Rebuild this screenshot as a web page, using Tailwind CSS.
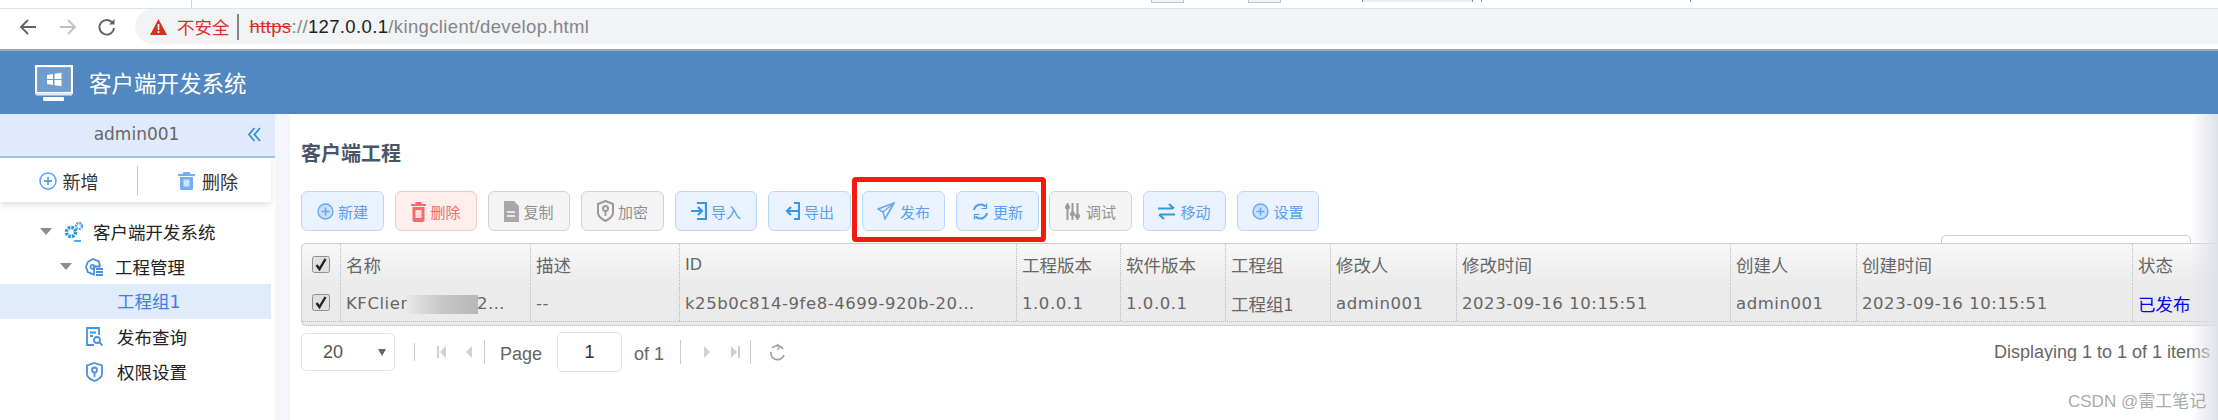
<!DOCTYPE html>
<html lang="zh-CN">
<head>
  <meta charset="UTF-8" />
  <title>客户端开发系统</title>
  <script src="https://cdn.jsdelivr.net/npm/@tailwindcss/browser@4"></script>
</head>
<body class="bg-white overflow-hidden font-['Noto_Sans_CJK_SC','Noto_Sans',sans-serif]">
  <div class="relative w-[2218px] h-[420px] overflow-hidden">

    <!-- Browser chrome -->
    <div class="relative h-[51px] bg-white border-b-2 border-[#aaa8a8]">
      <div class="flex h-[9px] border-b border-[#dfe1e3]">
        <div class="w-[192px] border-r border-[#d5d5d5]"></div>
        <div class="w-[959px]"></div>
        <div class="w-[33px] h-[3px] bg-[#f2f2f2] border-x border-b border-[#c4c4c4]"></div>
        <div class="w-[64px]"></div>
        <div class="w-[33px] h-[3px] bg-[#f2f2f2] border-x border-b border-[#c4c4c4]"></div>
        <div class="w-[81px]"></div>
        <div class="w-[111px] h-[2px] bg-[#eeeeee] border-x border-[#888]"></div>
        <div class="w-[8px]"></div>
        <div class="w-[210px] h-[2px] border-x border-[#888]"></div>
      </div>
      <div class="flex items-center h-[35px]">
        <svg class="ml-[18px] w-[20px] h-[20px]" viewBox="0 0 20 20" fill="none" stroke="#5f6368" stroke-width="1.8"><path d="M18 10H3M10 3l-7 7 7 7"/></svg>
        <svg class="ml-[20px] w-[20px] h-[20px]" viewBox="0 0 20 20" fill="none" stroke="#bdc1c6" stroke-width="1.8"><path d="M2 10h15M10 3l7 7-7 7"/></svg>
        <svg class="ml-[19px] w-[20px] h-[20px]" viewBox="0 0 20 20" fill="none" stroke="#5f6368" stroke-width="1.9"><path d="M16 6.5A7.3 7.3 0 1 0 17 11"/><path d="M17.5 2v5.5H12" fill="#5f6368" stroke="none"/></svg>
        <div class="ml-[18px] flex-1 h-[35px] bg-[#f1f3f4] rounded-l-[18px] flex items-center text-[17.5px]">
          <svg class="ml-[15px] w-[17px] h-[16px]" viewBox="0 0 17 16"><path d="M8.5 0 17 16H0z" fill="#d93025"/><path d="M7.7 5h1.6v6H7.700zM7.700 12h1.600v2H7.700z" fill="#fff"/></svg>
          <span class="ml-[10px] text-[#d93025] leading-none">不安全</span>
          <span class="ml-[7px] w-[2px] h-[26px] bg-[#80868b]"></span>
          <span class="ml-[11px] font-['Liberation_Sans',sans-serif] text-[18.5px] text-[#80868b] tracking-[0.36px] whitespace-nowrap"><span class="text-[#d93025] line-through">https</span>://<span class="text-[#202124]">127.0.0.1</span>/kingclient/develop.html</span>
        </div>
      </div>
    </div>

    <!-- App header -->
    <div class="h-[63px] bg-[#5288c1] flex items-center text-white">
      <svg class="ml-[35px] w-[38px] h-[36px]" viewBox="0 0 38 36">
        <rect x="1" y="1" width="36" height="27" fill="#6f9dce" stroke="#fff" stroke-width="2.200"/>
        <path d="M1 28h36v2.500H1z" fill="#dce8f5"/>
        <rect x="8" y="32" width="21" height="4" rx="1" fill="#fff"/>
        <path d="M12 10l6-1v5h-6zM19.500 8.800l7-1.100V14h-7zM12 15h6v5l-6-1zM19.500 15h7v6.300l-7-1.100z" fill="#fff"/>
      </svg>
      <div class="ml-[16px] text-[22.5px] leading-none whitespace-nowrap">客户端开发系统</div>
    </div>

    <div class="flex h-[306px]">
      <!-- Sidebar -->
      <div class="w-[275px] shrink-0 bg-white">
        <div class="relative h-[44px] bg-[#e0eafc] border-b-2 border-[#9cc5ec] flex items-center justify-center text-[17px] text-[#666] font-['DejaVu_Sans',sans-serif]">
          <span class="ml-[-2px]">admin001</span>
          <svg class="absolute left-[248px] top-[13px] w-[13px] h-[15px]" viewBox="0 0 13 15" fill="none" stroke="#2f8fe0" stroke-width="1.800"><path d="M6.500 1 1 7.500 6.500 14M12 1 6.500 7.500 12 14"/></svg>
        </div>
        <div class="w-[271px] h-[44px] pt-[2px] flex items-center shadow-[0_3px_6px_rgba(0,0,0,0.12)] text-[18px] text-[#333]">
          <div class="w-[137px] flex items-center justify-center">
            <svg class="w-[18px] h-[18px]" viewBox="0 0 18 18" fill="none" stroke="#5a9ff5" stroke-width="1.500"><circle cx="9" cy="9" r="8"/><path d="M9 5v8M5 9h8" stroke-width="1.800"/></svg>
            <span class="ml-[6px] leading-none">新增</span>
          </div>
          <div class="w-px h-[30px] bg-[#c8c8c8]"></div>
          <div class="flex-1 flex items-center pl-[40px]">
            <svg class="w-[17px] h-[18px]" viewBox="0 0 17 18"><path d="M5.500 0h6l1 2H17v2H0V2h4.500z" fill="#6fb0f5"/><path d="M2 5h13v11.500a1.500 1.500 0 0 1-1.500 1.500h-10A1.500 1.500 0 0 1 2 16.500z" fill="#6fb0f5"/><path d="M5.500 7.500h6v7h-6z" fill="#cfe4fb"/></svg>
            <span class="ml-[7px] leading-none">删除</span>
          </div>
        </div>
        <div class="pt-[12px] w-[271px] text-[17.500px] text-[#222] leading-none">
          <div class="h-[35px] flex items-center">
            <span class="ml-[40px] w-0 h-0 border-x-[6px] border-x-transparent border-t-[7px] border-t-[#8d8d8d]"></span>
            <svg class="ml-[12px] w-[20px] h-[21px]" viewBox="0 0 20 21" fill="none"><circle cx="7" cy="11" r="4.500" stroke="#2b97d8" stroke-width="3.500" stroke-dasharray="2.500 1"/><circle cx="15" cy="5" r="3" stroke="#57a5ea" stroke-width="2.500" stroke-dasharray="2 .8"/><path d="M10 20h7" stroke="#57a5ea" stroke-width="2"/></svg>
            <span class="ml-[9px] whitespace-nowrap">客户端开发系统</span>
          </div>
          <div class="h-[35px] flex items-center">
            <span class="ml-[60px] w-0 h-0 border-x-[6px] border-x-transparent border-t-[7px] border-t-[#8d8d8d]"></span>
            <svg class="ml-[13px] w-[18px] h-[18px]" viewBox="0 0 18 18" fill="none" stroke="#4a90e2" stroke-width="1.800"><path d="M8 1l6 2.500.8 5H9v8.200L2.800 14 1 9l1.800-5z"/><circle cx="7.500" cy="8.800" r="2"/><path d="M11 11h7M11 14h7M11 17h7"/></svg>
            <span class="ml-[12px]">工程管理</span>
          </div>
          <div class="h-[35px] flex items-center bg-[#e0ebfc] text-[#3f7ee8]">
            <span class="ml-[117px]">工程组<span class="font-['DejaVu_Sans',sans-serif]">1</span></span>
          </div>
          <div class="h-[35px] flex items-center">
            <svg class="ml-[86px] w-[17px] h-[19px]" viewBox="0 0 17 19" fill="none" stroke="#4a90e2" stroke-width="1.800"><path d="M8 18H1V1h12v7"/><path d="M4 5.500h6M4 9h3"/><circle cx="11" cy="13" r="3"/><path d="M13.500 15.500 16.500 18.500"/></svg>
            <span class="ml-[14px]">发布查询</span>
          </div>
          <div class="h-[35px] flex items-center">
            <svg class="ml-[86px] w-[17px] h-[20px]" viewBox="0 0 17 20" fill="none" stroke="#4a90e2" stroke-width="1.800"><path d="M8.500 1 16 3.500V12c0 3-4 6-7.500 7C5 18 1 15 1 12V3.500z"/><circle cx="8.500" cy="8" r="2.500"/><path d="M8.500 10.500v4.500"/></svg>
            <span class="ml-[14px]">权限设置</span>
          </div>
        </div>
      </div>
      <div class="w-[15px] shrink-0 bg-[#f4f6fb]"></div>

      <!-- Main -->
      <div class="relative flex-1 min-w-0 pl-[11px]">
        <div class="h-[77px] flex items-center text-[20px] font-bold text-[#4b5568] leading-none">客户端工程</div>

        <div class="flex gap-[11px] h-[40px] text-[15px] leading-none">
          <div class="w-[83px] flex items-center justify-center gap-[4px] rounded-[6px] border border-[#b8d8fb] bg-[#e9f2fe] text-[#5a9ff5]">
            <svg class="w-[17px] h-[17px]" viewBox="0 0 17 17" fill="#c8e0fb" stroke="#64a6f5" stroke-width="1.300"><circle cx="8.500" cy="8.500" r="7.500"/><path d="M8.500 4.500v8M4.500 8.500h8" stroke-width="1.600"/></svg>新建
          </div>
          <div class="w-[82px] flex items-center justify-center gap-[4px] rounded-[6px] border border-[#fdc3c3] bg-[#feeeee] text-[#f56c6c]">
            <svg class="w-[15px] h-[21px]" viewBox="0 0 15 21"><path d="M5 1h5l1 2h4v2H0V3h4z" fill="#f56c6c"/><path d="M1.500 6h12v13a2 2 0 0 1-2 2h-8a2 2 0 0 1-2-2z" fill="#f56c6c"/><path d="M4.500 9h6v8h-6z" fill="#fdd"/></svg>删除
          </div>
          <div class="w-[82px] flex items-center justify-center gap-[4px] rounded-[6px] border border-[#d3d3d3] bg-[#f4f4f4] text-[#909090]">
            <svg class="w-[15px] h-[21px]" viewBox="0 0 15 21"><path d="M0 0h10l5 5v16H0z" fill="#a8a8a8"/><path d="M3 10h8v2H3zM3 14h8v2H3z" fill="#e8e8e8"/></svg>复制
          </div>
          <div class="w-[83px] flex items-center justify-center gap-[4px] rounded-[6px] border border-[#d3d3d3] bg-[#f4f4f4] text-[#909090]">
            <svg class="w-[17px] h-[22px]" viewBox="0 0 17 22" fill="none" stroke="#9a9a9a" stroke-width="2"><path d="M8.500 1 16 4v9c0 3-4 6.500-7.500 8C5 19.500 1 16 1 13V4z"/><circle cx="8.500" cy="8.500" r="2.500"/><path d="M8.500 11v5"/></svg>加密
          </div>
          <div class="w-[82px] flex items-center justify-center gap-[4px] rounded-[6px] border border-[#b8d8fb] bg-[#e9f2fe] text-[#5a9ff5]">
            <svg class="w-[16px] h-[18px]" viewBox="0 0 16 18" fill="none" stroke="#3a94e8" stroke-width="2.200"><path d="M6 1h9v16H6M0 9h10M7 5l4 4-4 4"/></svg>导入
          </div>
          <div class="w-[83px] flex items-center justify-center gap-[4px] rounded-[6px] border border-[#b8d8fb] bg-[#e9f2fe] text-[#5a9ff5]">
            <svg class="w-[15px] h-[18px]" viewBox="0 0 15 18" fill="none" stroke="#3a94e8" stroke-width="2.200"><path d="M9 1h5v16H9M13 9H2M6 5 2 9l4 4"/></svg>导出
          </div>
          <div class="w-[83px] flex items-center justify-center gap-[5px] rounded-[6px] border border-[#b8d8fb] bg-[#e9f2fe] text-[#5a9ff5]">
            <svg class="w-[18px] h-[18px]" viewBox="0 0 18 18" fill="none" stroke="#6aa8f0" stroke-width="1.500"><path d="M17 1 1 7l5 3 2 7z"/><path d="M6 10 17 1 8 17"/></svg>发布
          </div>
          <div class="w-[83px] flex items-center justify-center gap-[4px] rounded-[6px] border border-[#b8d8fb] bg-[#e9f2fe] text-[#5a9ff5]">
            <svg class="w-[17px] h-[17px]" viewBox="0 0 17 17" fill="none" stroke="#4a9cec" stroke-width="2"><path d="M2 7a6.800 6.800 0 0 1 11.500-3.500M15 10a6.800 6.800 0 0 1-11.500 3.500"/><path d="M14.500 .5v5h-5M2.500 16.500v-5h5" stroke-width="1.200"/></svg>更新
          </div>
          <div class="ml-[-1px] w-[83px] flex items-center justify-center gap-[6px] rounded-[6px] border border-[#d3d3d3] bg-[#f4f4f4] text-[#909090]">
            <svg class="w-[15px] h-[17px]" viewBox="0 0 15 17" fill="none" stroke="#9a9a9a" stroke-width="2"><path d="M2.500 0v17M7.500 0v17M12.500 0v17"/><circle cx="2.500" cy="4" r="1.500" fill="#9a9a9a"/><circle cx="7.500" cy="11" r="1.500" fill="#9a9a9a"/><circle cx="12.500" cy="13" r="1.500" fill="#9a9a9a"/></svg>调试
          </div>
          <div class="w-[83px] flex items-center justify-center gap-[5px] rounded-[6px] border border-[#b8d8fb] bg-[#e9f2fe] text-[#5a9ff5]">
            <svg class="w-[17px] h-[17px]" viewBox="0 0 17 17" fill="none" stroke="#2f9ad8" stroke-width="2"><path d="M0 5.500h15M11 1l5 4.500M17 11.500H2M6 16l-5-4.500"/></svg>移动
          </div>
          <div class="w-[82px] flex items-center justify-center gap-[4px] rounded-[6px] border border-[#b8d8fb] bg-[#e9f2fe] text-[#5a9ff5]">
            <svg class="w-[17px] h-[17px]" viewBox="0 0 17 17" fill="#c8e0fb" stroke="#64a6f5" stroke-width="1.300"><circle cx="8.500" cy="8.500" r="7.500"/><path d="M8.500 4.500v8M4.500 8.500h8" stroke-width="1.600"/></svg>设置
          </div>
        </div>

        <!-- Search box hidden behind the table -->
        <div class="absolute left-[1651px] top-[121px] w-[250px] h-[12px] border border-[#cfcfcf] rounded-t-[5px]"></div>

        <!-- Table -->
        <div class="relative mt-[12px] h-[83px] border border-[#cfcfcf] border-r-0 rounded-l-[5px] bg-white overflow-hidden text-[#666] text-[17.500px] leading-none bg-gradient-to-b from-[#f8f8f8] to-[#ebebeb] to-50%">
          <div class="grid h-[41px] grid-cols-[38px_190px_149px_337px_104px_105px_105px_126px_274px_126px_276px_86px] items-center">
            <div class="h-full flex items-center justify-center">
              <svg class="w-[18px] h-[17px]" viewBox="0 0 18 17"><rect x=".5" y=".5" width="17" height="16" rx="2" fill="#e0e0e0" stroke="#8f8f8f"/><path d="M4.500 9 7.500 13 13.500 3" fill="none" stroke="#222" stroke-width="2.400"/></svg>
            </div>
            <div class="h-full pl-[5px] flex items-center border-l border-dotted border-[#bbb]">名称</div>
            <div class="h-full pl-[5px] flex items-center border-l border-dotted border-[#bbb]">描述</div>
            <div class="h-full pl-[5px] flex items-center border-l border-dotted border-[#bbb] font-['DejaVu_Sans',sans-serif] text-[16px]">ID</div>
            <div class="h-full pl-[5px] flex items-center border-l border-dotted border-[#bbb]">工程版本</div>
            <div class="h-full pl-[5px] flex items-center border-l border-dotted border-[#bbb]">软件版本</div>
            <div class="h-full pl-[5px] flex items-center border-l border-dotted border-[#bbb]">工程组</div>
            <div class="h-full pl-[5px] flex items-center border-l border-dotted border-[#bbb]">修改人</div>
            <div class="h-full pl-[5px] flex items-center border-l border-dotted border-[#bbb]">修改时间</div>
            <div class="h-full pl-[5px] flex items-center border-l border-dotted border-[#bbb]">创建人</div>
            <div class="h-full pl-[5px] flex items-center border-l border-dotted border-[#bbb]">创建时间</div>
            <div class="h-full pl-[5px] flex items-center border-l border-dotted border-[#bbb]">状态</div>
          </div>
          <div class="grid h-[37px] pt-[2px] border-b border-dotted border-[#bbb] grid-cols-[38px_190px_149px_337px_104px_105px_105px_126px_274px_126px_276px_86px] items-center font-['DejaVu_Sans',sans-serif] text-[16.500px] tracking-[0.55px] whitespace-nowrap">
            <div class="h-full flex items-center justify-center">
              <svg class="w-[18px] h-[17px] mb-[4px]" viewBox="0 0 18 17"><rect x=".5" y=".5" width="17" height="16" rx="2" fill="#e0e0e0" stroke="#8f8f8f"/><path d="M4.500 9 7.500 13 13.500 3" fill="none" stroke="#222" stroke-width="2.400"/></svg>
            </div>
            <div class="relative h-full pl-[5px] flex items-center border-l border-dotted border-[#bbb]">KFClient<span class="absolute left-[66px] top-[8px] w-[71px] h-[19px] bg-gradient-to-r from-[#e8e8e8] via-[#c6c6c6] to-[#b8b8b8]"></span><span class="absolute left-[136px]">2…</span></div>
            <div class="h-full pl-[5px] flex items-center border-l border-dotted border-[#bbb]">--</div>
            <div class="h-full pl-[5px] flex items-center border-l border-dotted border-[#bbb]">k25b0c814-9fe8-4699-920b-20…</div>
            <div class="h-full pl-[5px] flex items-center border-l border-dotted border-[#bbb]">1.0.0.1</div>
            <div class="h-full pl-[5px] flex items-center border-l border-dotted border-[#bbb]">1.0.0.1</div>
            <div class="h-full pl-[5px] flex items-center border-l border-dotted border-[#bbb] font-['Noto_Sans_CJK_SC',sans-serif] text-[17.500px] tracking-normal">工程组1</div>
            <div class="h-full pl-[5px] flex items-center border-l border-dotted border-[#bbb]">admin001</div>
            <div class="h-full pl-[5px] flex items-center border-l border-dotted border-[#bbb]">2023-09-16 10:15:51</div>
            <div class="h-full pl-[5px] flex items-center border-l border-dotted border-[#bbb]">admin001</div>
            <div class="h-full pl-[5px] flex items-center border-l border-dotted border-[#bbb]">2023-09-16 10:15:51</div>
            <div class="h-full pl-[5px] flex items-center border-l border-dotted border-[#bbb] text-[#0000ff] font-['Noto_Sans_CJK_SC',sans-serif] text-[17.500px] tracking-normal">已发布</div>
          </div>
        </div>

        <!-- Pagination -->
        <div class="flex items-center h-[40px] mt-[6px] text-[18px] text-[#666] font-['Liberation_Sans',sans-serif] leading-none whitespace-nowrap">
          <div class="relative w-[94px] h-[38px] border border-[#e3e3e3] rounded-[5px] flex items-center pl-[21px] text-[#555]">20
            <span class="absolute right-[8px] top-[15px] w-0 h-0 border-x-[4px] border-x-transparent border-t-[7px] border-t-[#666]"></span>
          </div>
          <span class="ml-[19px] w-px h-[18px] bg-[#ccc]"></span>
          <svg class="ml-[22px] w-[10px] h-[12px]" viewBox="0 0 10 12" fill="#cfcfcf"><path d="M0 0h2v12H0zM9 0v12L3 6z"/></svg>
          <svg class="ml-[19px] w-[6px] h-[12px]" viewBox="0 0 6 12" fill="#cfcfcf"><path d="M6 0v12L0 6z"/></svg>
          <span class="ml-[12px] w-px h-[24px] bg-[#ccc]"></span>
          <span class="ml-[15px] mt-[3px]">Page</span>
          <div class="ml-[15px] w-[65px] h-[40px] border border-[#e3e3e3] rounded-[5px] flex items-center justify-center text-[#333]">1</div>
          <span class="ml-[12px] mt-[3px]">of 1</span>
          <span class="ml-[16px] w-px h-[24px] bg-[#ccc]"></span>
          <svg class="ml-[23px] w-[6px] h-[12px]" viewBox="0 0 6 12" fill="#cfcfcf"><path d="M0 0v12l6-6z"/></svg>
          <svg class="ml-[20px] w-[10px] h-[12px]" viewBox="0 0 10 12" fill="#cfcfcf"><path d="M1 0v12l6-6zM8 0h2v12H8z"/></svg>
          <span class="ml-[10px] w-px h-[24px] bg-[#ccc]"></span>
          <svg class="ml-[18px] w-[17px] h-[18px]" viewBox="0 0 17 18" fill="none" stroke="#9aa5b1" stroke-width="1.800"><path d="M3 5a7 7 0 0 1 11 1M15 12a7 7 0 0 1-12 2M2 9a7 7 0 0 0 1 5"/><path d="M8 1 11 4 8 7" stroke-width="1.400"/></svg>
          <span class="ml-auto w-[224px] overflow-hidden">Displaying 1 to 1 of 1 items</span>
        </div>
      </div>
    </div>

    <!-- Red annotation -->
    <div class="absolute left-[852px] top-[177px] w-[194px] h-[65px] border-[5px] border-[#f5190f] rounded-[4px]"></div>
    <!-- Right edge shadow -->
    <div class="absolute right-0 top-[114px] w-[28px] h-[306px] bg-gradient-to-r from-transparent to-[#dfe2e8]"></div>
    <!-- Watermark -->
    <div class="absolute left-[2068px] top-[391px] text-[17px] leading-[22px] text-[#aaaaaa] whitespace-nowrap font-['Liberation_Sans','Noto_Sans_CJK_SC',sans-serif]">CSDN @雷工笔记</div>
  </div>
</body>
</html>
